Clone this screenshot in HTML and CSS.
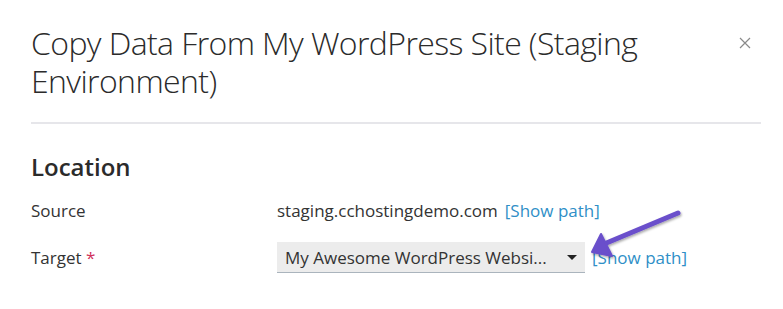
FILE: index.html
```html
<!DOCTYPE html>
<html lang="en">
<head>
  <meta charset="UTF-8">
  <title>Copy Data</title>
  <link rel="stylesheet" href="styles.css">
</head>
<body>

  <div class="modal">
    <!-- Header -->
    <div class="modal-header">
      <h1>Copy Data From My WordPress Site (Staging Environment)</h1>
      <button class="close" aria-label="Close">
        <svg width="12" height="12" viewBox="0 0 12 12">
          <path d="M1 1 L11 11 M11 1 L1 11" stroke="#8a8a8a" stroke-width="1.2" fill="none"/>
        </svg>
      </button>
    </div>

    <!-- Location section -->
    <div class="section">
      <h2>Location</h2>
      <div class="row">
        <div class="label">Source</div>
        <div class="value">
          staging.cchostingdemo.com <a href="#" class="path-link">[Show path]</a>
        </div>
      </div>
      <div class="row">
        <div class="label">Target <span class="required">*</span></div>
        <div class="value">
          <div class="select">
            <span>My Awesome WordPress Websi...</span>
            <span class="caret"></span>
          </div>
          <a href="#" class="path-link">[Show path]</a>
        </div>
      </div>
    </div>
  </div>

  <!-- Annotation arrow -->
  <svg class="arrow" width="120" height="70" viewBox="0 0 120 70">
    <defs>
      <filter id="shadow" x="-20%" y="-20%" width="140%" height="140%">
        <feDropShadow dx="1" dy="1.5" stdDeviation="1.2" flood-color="#000" flood-opacity="0.35"/>
      </filter>
    </defs>
    <g filter="url(#shadow)" fill="#6a4fcb" stroke="#6a4fcb" stroke-linecap="round" stroke-linejoin="round">
      <path d="M96 13 L22 44" stroke-width="5" fill="none"/>
      <path d="M10 52 L19 34 L30 56 Z" stroke-width="2"/>
    </g>
  </svg>

</body>
</html>
```

FILE: styles.css
```css
body {
  margin: 0;
  background: #fff;
  font-family: "Open Sans", Arial, sans-serif;
  color: #333;
}
.modal {
  padding: 0 22px 0 31px;
}
.modal-header {
  display: flex;
  align-items: flex-start;
  justify-content: space-between;
  padding-top: 24px;
  padding-bottom: 22px;
  border-bottom: 2px solid #e6e6ea;
}
.modal-header h1 {
  margin: 0;
  width: 660px;
  font-size: 32px;
  font-weight: 300;
  line-height: 38px;
  letter-spacing: -0.6px;
  color: #2b2b2b;
}
.close {
  background: none;
  border: none;
  padding: 0;
  margin: 13px 10px 0 0;
  cursor: pointer;
}
.section {
  padding-top: 27px;
}
.section h2 {
  margin: 0 0 12px;
  font-size: 24px;
  font-weight: 600;
  line-height: 32px;
  color: #2b2b2b;
}
.row {
  display: flex;
  align-items: center;
  min-height: 31px;
  margin-bottom: 16px;
  font-size: 17px;
}
.label {
  width: 246px;
  color: #333;
}
.required {
  color: #d0315a;
}
.value {
  display: flex;
  align-items: center;
  gap: 7px;
  color: #333;
}
.path-link {
  color: #2f8fc7;
  text-decoration: none;
}
.select {
  display: flex;
  align-items: center;
  justify-content: space-between;
  width: 292px;
  height: 30px;
  padding: 0 8px;
  background: #ececec;
  border-bottom: 1px solid #aab4bd;
  box-sizing: content-box;
}
.select span:first-child {
  white-space: nowrap;
}
.caret {
  width: 0;
  height: 0;
  border-left: 5px solid transparent;
  border-right: 5px solid transparent;
  border-top: 5px solid #222;
}
.arrow {
  position: absolute;
  left: 582px;
  top: 200px;
}
```
